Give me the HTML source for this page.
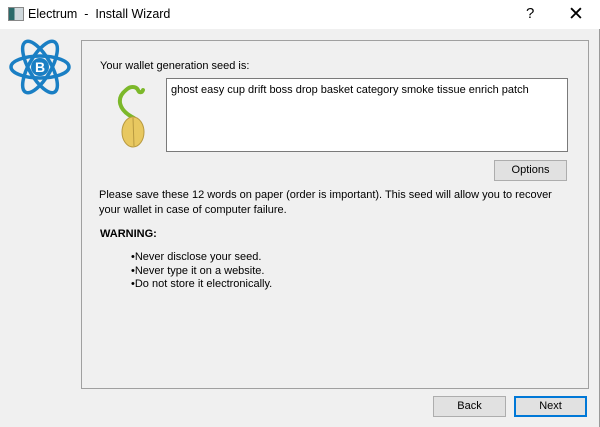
<!DOCTYPE html>
<html><head><style>
body{margin:0;width:600px;height:427px;background:#f0f0f0;font-family:"Liberation Sans",sans-serif;font-size:11px;color:#000;position:relative;overflow:hidden}
.a{position:absolute}
.btn{position:absolute;background:#e1e1e1;border:1px solid #adadad;text-align:center;box-sizing:border-box;line-height:19px}
</style></head><body>
<div class="a" style="left:0;top:0;width:600px;height:29px;background:#fff"></div>
<div class="a" style="left:8px;top:7px;width:14px;height:12px;border:1px solid #888;background:linear-gradient(90deg,#2a6a6a 40%,#cfd8dc 40%)"></div>
<div class="a" style="left:28px;top:7px;font-size:12.5px">Electrum &nbsp;- &nbsp;Install Wizard</div>
<div class="a" style="left:526px;top:5px;font-size:15px">?</div>
<div class="a" style="left:568px;top:3px;font-size:19px;font-weight:300">✕</div>
<svg class="a" style="left:9px;top:38px" width="62" height="58" viewBox="0 0 62 58">
<g fill="none" stroke="#1a7fc4" stroke-width="3.5">
<ellipse cx="31" cy="29" rx="29" ry="11"/>
<ellipse cx="31" cy="29" rx="29" ry="11" transform="rotate(60 31 29)"/>
<ellipse cx="31" cy="29" rx="29" ry="11" transform="rotate(-60 31 29)"/>
</g>
<circle cx="31" cy="29" r="9" fill="#1a7fc4"/>
<text x="31" y="34" font-size="14" font-weight="bold" fill="#fff" text-anchor="middle" font-family="Liberation Sans">B</text>
</svg>
<div class="a" style="left:81px;top:40px;width:506px;height:347px;border:1px solid #a0a0a0"></div>
<div class="a" style="left:100px;top:60px">Your wallet generation seed is:</div>
<svg class="a" style="left:108px;top:80px" width="46" height="68" viewBox="0 0 46 68">
<path d="M26 38 C10 30 8 18 18 10 C22 6 28 6 30 10 C31 13 34 13 35 10" fill="none" stroke="#7cb82a" stroke-width="4" stroke-linecap="round"/>
<ellipse cx="25" cy="52" rx="11" ry="15" fill="#e8c860" stroke="#b89a40"/>
<path d="M25 38 L26 66" stroke="#b89a40"/>
</svg>
<div class="a" style="left:166px;top:78px;width:402px;height:74px;background:#fff;border:1px solid #7a7a7a;box-sizing:border-box;padding:5px 4px">ghost easy cup drift boss drop basket category smoke tissue enrich patch</div>
<div class="btn" style="left:494px;top:160px;width:73px;height:21px">Options</div>
<div class="a" style="left:99px;top:188px;line-height:15px">Please save these 12 words on paper (order is important). This seed will allow you to recover<br>your wallet in case of computer failure.</div>
<div class="a" style="left:100px;top:228px;font-weight:bold">WARNING:</div>
<div class="a" style="left:131px;top:251px;line-height:13.5px">•Never disclose your seed.<br>•Never type it on a website.<br>•Do not store it electronically.</div>
<div class="btn" style="left:433px;top:396px;width:73px;height:21px">Back</div>
<div class="btn" style="left:514px;top:396px;width:73px;height:21px;border:2px solid #0078d7;line-height:17px">Next</div>
<div class="a" style="left:599px;top:29px;width:1px;height:398px;background:#9a9a9a"></div>
</body></html>
